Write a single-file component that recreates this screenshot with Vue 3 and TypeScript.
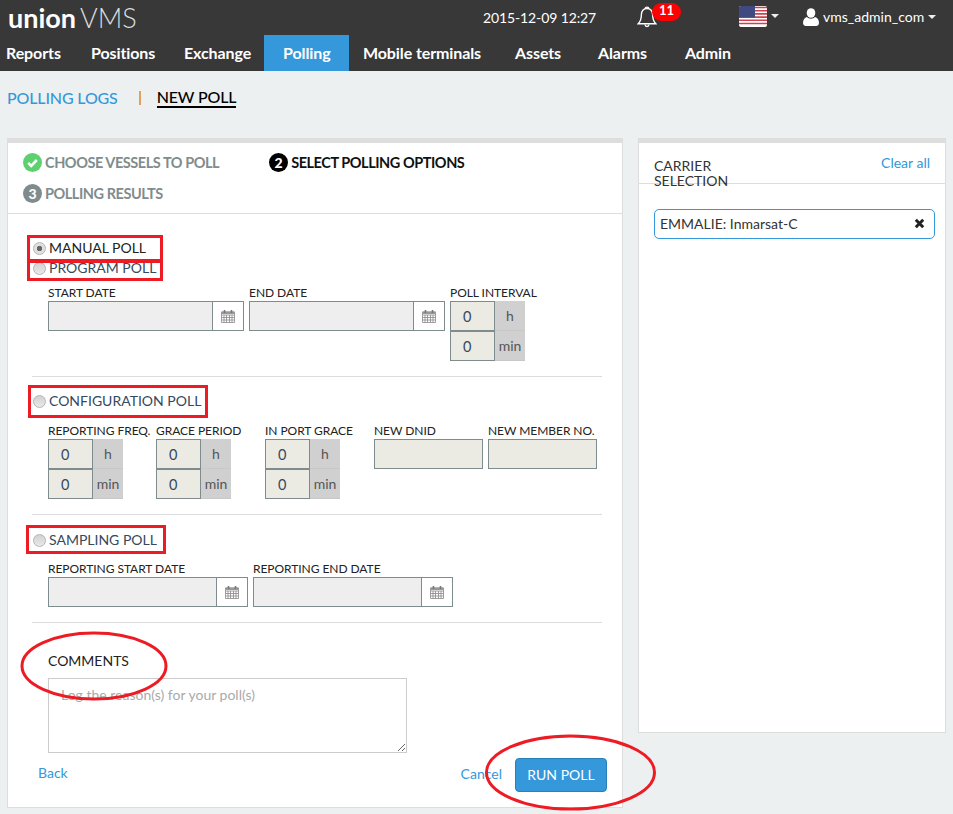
<script setup lang="ts">
const navItems = [
  { label: 'Reports', width: 77 },
  { label: 'Positions', width: 93 },
  { label: 'Exchange', width: 94 },
  { label: 'Polling', width: 85 },
  { label: 'Mobile terminals', width: 152 },
  { label: 'Assets', width: 83 },
  { label: 'Alarms', width: 87 },
  { label: 'Admin', width: 80 },
]

const configFields = [
  { label: 'REPORTING FREQ.', width: 108 },
  { label: 'GRACE PERIOD', width: 109 },
  { label: 'IN PORT GRACE', width: 109 },
]
</script>

<template>
  <div class="page">
    <header class="topbar">
      <div class="topbar-row">
        <div class="logo"><strong>union</strong> <span>VMS</span></div>
        <div class="datetime">2015-12-09 12:27</div>
        <div class="bell">
          <svg width="20" height="24" viewBox="0 0 20 24" fill="none" stroke="#fff" stroke-width="1.4">
            <path d="M10 2.500c-3.600 0-5.600 2.600-5.600 6 0 4.600-1 7-3.200 9.200h17.600c-2.200-2.200-3.200-4.600-3.200-9.200 0-3.400-2-6-5.600-6z" />
            <path d="M8.200 2.600c0-2 3.600-2 3.600 0M8 18.500c.3 2.600 3.700 2.600 4 0" />
          </svg>
          <span class="badge">11</span>
        </div>
        <div class="flag">
          <svg width="28" height="21" viewBox="0 0 28 21">
            <rect width="28" height="21" rx="2" fill="#fff" />
            <path d="M0 1.500h28M0 4.700h28M0 7.900h28M0 11.100h28M0 14.300h28M0 17.500h28" stroke="#c9444f" stroke-width="1.600" />
            <path d="M2 0h14v11.500H0V2a2 2 0 0 1 2-2z" fill="#3f4a80" />
          </svg>
          <i class="caret"></i>
        </div>
        <div class="user">
          <svg width="16" height="18" viewBox="0 0 16 18" fill="#fff">
            <ellipse cx="8" cy="5" rx="4.300" ry="4.800" />
            <path d="M0 15c0-3.500 1.600-5.500 4-6 1 1.200 2.500 1.700 4 1.700S11 10.200 12 9c2.400.5 4 2.500 4 6 0 2-1.500 3-3 3H3c-1.500 0-3-1-3-3z" />
          </svg>
          <span>vms_admin_com</span>
          <i class="caret"></i>
        </div>
      </div>
      <nav class="nav">
        <a
          v-for="item in navItems"
          :key="item.label"
          :class="{ active: item.label === 'Polling' }"
          :style="{ width: item.width + 'px' }"
        >{{ item.label }}</a>
      </nav>
    </header>

    <div class="subtabs">
      <a class="subtab-link">POLLING LOGS</a>
      <span class="subtab-sep"></span>
      <a class="subtab-current">NEW POLL</a>
    </div>

    <main class="content">
      <section class="panel panel-form">
        <div class="steps">
          <div class="step step-first done">
            <svg class="step-icon" width="19" height="19" viewBox="0 0 19 19">
              <circle cx="9.500" cy="9.500" r="9.500" fill="#5dd06f" />
              <path d="M5.200 9.800l3 3 5.600-5.800" fill="none" stroke="#fff" stroke-width="2.600" />
            </svg>
            CHOOSE VESSELS TO POLL
          </div>
          <div class="step current"><span class="step-num">2</span>SELECT POLLING OPTIONS</div>
          <div class="step"><span class="step-num">3</span>POLLING RESULTS</div>
        </div>

        <div class="form">
          <div class="poll-section first">
            <label class="radio-row checked"><i class="radio"></i>MANUAL POLL</label>
            <label class="radio-row"><i class="radio"></i>PROGRAM POLL</label>
            <div class="fields fields-program">
              <div class="field">
                <div class="field-label">START DATE</div>
                <div class="date-group w196">
                  <input class="date-input" />
                  <span class="cal">
                    <svg width="14" height="14" viewBox="0 0 14 14"><use href="#cal-icon" /></svg>
                  </span>
                </div>
              </div>
              <div class="field">
                <div class="field-label">END DATE</div>
                <div class="date-group w196">
                  <input class="date-input" />
                  <span class="cal">
                    <svg width="14" height="14" viewBox="0 0 14 14"><use href="#cal-icon" /></svg>
                  </span>
                </div>
              </div>
              <div class="field">
                <div class="field-label">POLL INTERVAL</div>
                <div class="time-row"><input class="time-input" value="0" /><span class="unit">h</span></div>
                <div class="time-row"><input class="time-input" value="0" /><span class="unit">min</span></div>
              </div>
            </div>
          </div>

          <div class="poll-section second">
            <label class="radio-row"><i class="radio"></i>CONFIGURATION POLL</label>
            <div class="fields fields-config">
              <div v-for="f in configFields" :key="f.label" class="field" :style="{ width: f.width + 'px' }">
                <div class="field-label">{{ f.label }}</div>
                <div class="time-row"><input class="time-input" value="0" /><span class="unit">h</span></div>
                <div class="time-row"><input class="time-input" value="0" /><span class="unit">min</span></div>
              </div>
              <div class="field">
                <div class="field-label">NEW DNID</div>
                <input class="plain-input" />
              </div>
              <div class="field field-member">
                <div class="field-label">NEW MEMBER NO.</div>
                <input class="plain-input" />
              </div>
            </div>
          </div>

          <div class="poll-section third">
            <label class="radio-row"><i class="radio"></i>SAMPLING POLL</label>
            <div class="fields fields-sampling">
              <div class="field">
                <div class="field-label">REPORTING START DATE</div>
                <div class="date-group w200">
                  <input class="date-input" />
                  <span class="cal">
                    <svg width="14" height="14" viewBox="0 0 14 14"><use href="#cal-icon" /></svg>
                  </span>
                </div>
              </div>
              <div class="field">
                <div class="field-label">REPORTING END DATE</div>
                <div class="date-group w200">
                  <input class="date-input" />
                  <span class="cal">
                    <svg width="14" height="14" viewBox="0 0 14 14"><use href="#cal-icon" /></svg>
                  </span>
                </div>
              </div>
            </div>
          </div>

          <div class="comments">
            <div class="comments-title">COMMENTS</div>
            <textarea class="comments-box" placeholder="Log the reason(s) for your poll(s)"></textarea>
          </div>

          <div class="form-footer">
            <a class="link back">Back</a>
            <div class="footer-right">
              <a class="link cancel">Cancel</a>
              <button class="run-btn">RUN POLL</button>
            </div>
          </div>
        </div>
      </section>

      <aside class="panel panel-carrier">
        <div class="carrier-head">
          <h3>CARRIER SELECTION</h3>
          <a class="link">Clear all</a>
        </div>
        <div class="carrier-body">
          <div class="chip">
            <span>EMMALIE: Inmarsat-C</span>
            <svg width="11" height="11" viewBox="0 0 11 11">
              <path d="M1.800 1.800l7.400 7.400M9.200 1.800L1.800 9.200" stroke="#222" stroke-width="3" />
            </svg>
          </div>
        </div>
      </aside>
    </main>

    <svg class="defs" width="0" height="0">
      <symbol id="cal-icon" viewBox="0 0 14 14">
        <path
          d="M.5 3h13v10.500H.5zM.5 6h13M.5 8.500h13M.5 11h13M3 6v7.500M5.500 6v7.500M8.500 6v7.500M11 6v7.500"
          fill="none"
          stroke="#888"
          stroke-width=".8"
        />
        <path d="M.5 2.500h13V5H.5z" fill="#999" />
        <path d="M3.500 1v3M10.500 1v3" stroke="#777" stroke-width="1.600" />
      </symbol>
    </svg>

    <!-- hand drawn annotations on top of the screenshot -->
    <svg class="marks" width="953" height="814" viewBox="0 0 953 814" fill="none" stroke="#ed1c24" stroke-width="3">
      <rect x="28.500" y="236.500" width="133" height="24" />
      <rect x="28.500" y="261.500" width="133" height="18" />
      <rect x="29.500" y="386.500" width="177" height="30" />
      <rect x="27.500" y="526.500" width="137" height="26" />
      <ellipse cx="94" cy="666" rx="72" ry="33" />
      <ellipse cx="570.500" cy="772.500" rx="84" ry="36.500" />
    </svg>
  </div>
</template>

<style>
body {
  background: #ecf0f1;
}
</style>

<style scoped>
.page {
  position: relative;
  width: 953px;
  height: 814px;
  overflow: hidden;
  background: #ecf0f1;
  font-family: Lato, 'Open Sans', sans-serif;
  font-size: 14px;
  color: #333;
}

.topbar {
  background: #383838;
  height: 71px;
  color: #fff;
}

.topbar-row {
  display: flex;
  align-items: center;
  height: 35px;
  padding-left: 8px;
}

.logo {
  width: 475px;
  font-size: 27px;
  line-height: 37px;
  white-space: nowrap;
}

.logo strong {
  font-weight: 700;
}

.logo span {
  margin-left: -3px;
  font-weight: 300;
  color: #ddd;
}

.datetime {
  width: 154px;
  margin-top: -1px;
  font-size: 14px;
  letter-spacing: -0.12px;
}

.bell {
  position: relative;
  width: 102px;
  height: 24px;
}

.badge {
  position: absolute;
  left: 15px;
  top: -3px;
  width: 29px;
  height: 18px;
  border-radius: 9px;
  background: #f00;
  color: #fff;
  font-size: 13px;
  font-weight: 700;
  line-height: 15px;
  text-align: center;
}

.flag {
  display: flex;
  align-items: center;
  gap: 4px;
  width: 64px;
  margin-top: -3px;
}

.caret {
  display: inline-block;
  width: 0;
  height: 0;
  border-left: 4px solid transparent;
  border-right: 4px solid transparent;
  border-top: 4px solid #eee;
}

.user {
  display: flex;
  align-items: center;
  gap: 4px;
  font-size: 14px;
  margin-top: -2px;
}

.nav {
  display: flex;
  height: 36px;
}

.nav a {
  box-sizing: border-box;
  padding-left: 14px;
  font-size: 16px;
  font-weight: 700;
  letter-spacing: -0.1px;
  line-height: 35px;
  white-space: nowrap;
}

.nav a:first-child {
  padding-left: 6px;
}

.nav a.active {
  background: #3498db;
  padding-left: 19px;
}

.subtabs {
  display: flex;
  align-items: center;
  height: 53px;
  padding-left: 7px;
  font-size: 16px;
  font-weight: 500;
  letter-spacing: -0.15px;
}

.subtab-link {
  color: #3498db;
}

.subtab-sep {
  width: 2px;
  height: 14px;
  margin: 0 16px 0 21px;
  background: #e0a060;
}

.subtab-current {
  color: #000;
  border-bottom: 2px solid #000;
  line-height: 19px;
}

.content {
  display: flex;
  align-items: flex-start;
  gap: 15px;
  margin-top: 14px;
  padding-left: 7px;
}

.panel {
  box-sizing: border-box;
  background: #fff;
  border: 1px solid #ddd;
  border-top: 5px solid #ddd;
}

.panel-form {
  width: 616px;
  height: 670px;
}

.panel-carrier {
  width: 308px;
  height: 595px;
}

.steps {
  display: flex;
  flex-wrap: wrap;
  align-content: flex-start;
  height: 71px;
  box-sizing: border-box;
  padding: 4px 130px 0 15px;
  border-bottom: 1px solid #ddd;
}

.step {
  display: flex;
  align-items: center;
  gap: 3px;
  height: 31px;
  font-size: 14.500px;
  font-weight: 700;
  letter-spacing: -0.45px;
  color: #7f8c8d;
  white-space: nowrap;
}

.step-first {
  margin-right: 50px;
}

.step.current {
  color: #111;
}

.step-num {
  width: 19px;
  height: 19px;
  border-radius: 50%;
  background: #7f8c8d;
  color: #fff;
  font-size: 14px;
  font-weight: 900;
  letter-spacing: 0;
  line-height: 19px;
  text-align: center;
}

.current .step-num {
  background: #000;
}

.form {
  padding: 0 20px 0 24px;
}

.poll-section {
  border-bottom: 1px solid #ddd;
  padding-bottom: 15px;
}

.poll-section.first {
  padding-top: 24px;
}

.poll-section.second {
  padding-top: 14px;
}

.poll-section.third {
  padding-top: 15px;
}

.radio-row {
  display: flex;
  align-items: center;
  box-sizing: border-box;
  height: 20px;
  padding-bottom: 2px;
  font-size: 14px;
  color: #34495e;
}

.radio-row.checked {
  color: #222;
}

.radio {
  box-sizing: border-box;
  width: 13px;
  height: 13px;
  margin: 2px 3px 0 1px;
  border: 1px solid #b5b5b5;
  border-radius: 50%;
  background: linear-gradient(#d2d2d2, #e8e8e8);
}

.checked .radio {
  background: radial-gradient(circle, #666 0 2.500px, #e0e0e0 3px);
}

.fields {
  display: flex;
  padding-left: 16px;
}

.fields-program {
  gap: 5px;
  margin-top: 8px;
}

.fields-config {
  margin-top: 13px;
}

.fields-sampling {
  gap: 5px;
  margin-top: 12px;
}

.field-member {
  margin-left: 5px;
}

.field-label {
  height: 14px;
  margin-bottom: 1px;
  font-size: 12px;
  letter-spacing: -0.05px;
  line-height: 14px;
  color: #222;
  white-space: nowrap;
}

.date-group {
  display: flex;
  box-sizing: border-box;
  height: 30px;
  border: 1px solid #7f8c8d;
  background: #fff;
}

.w196 {
  width: 196px;
}

.w200 {
  width: 200px;
}

.date-input {
  flex: 1;
  min-width: 0;
  box-sizing: border-box;
  border: 0;
  border-right: 1px solid #7f8c8d;
  padding: 0;
  background: #eee;
}

.cal {
  display: flex;
  align-items: center;
  justify-content: center;
  width: 30px;
}

.time-row {
  display: flex;
  height: 30px;
}

.time-input {
  box-sizing: border-box;
  width: 45px;
  height: 30px;
  border: 1px solid #7f8c8d;
  padding: 0 0 0 12px;
  background: #ebebe4;
  color: #34495e;
  font: inherit;
  font-size: 14.500px;
}

.unit {
  width: 30px;
  background: #d0d0d0;
  border-bottom: 1px solid #c8c8c8;
  box-sizing: border-box;
  color: #555;
  font-size: 14px;
  line-height: 29px;
  text-align: center;
}

.plain-input {
  display: block;
  box-sizing: border-box;
  width: 109px;
  height: 30px;
  border: 1px solid #7f8c8d;
  padding: 0;
  background: #ebebe4;
}

.comments {
  padding: 29px 0 0 16px;
}

.comments-title {
  font-size: 14px;
  line-height: 18px;
  color: #222;
}

.comments-box {
  display: block;
  box-sizing: border-box;
  width: 359px;
  height: 75px;
  margin-top: 8px;
  border: 1px solid #ccc;
  padding: 7px 12px;
  font: inherit;
  font-size: 14px;
}

.comments-box::placeholder {
  color: #aaa;
  opacity: 1;
}

.form-footer {
  display: flex;
  justify-content: space-between;
  align-items: center;
  height: 34px;
  margin: 5px -5px 0 6px;
}

.footer-right {
  display: flex;
  align-items: center;
  gap: 13px;
}

.link {
  color: #3498db;
  font-size: 14px;
}

.back {
  margin-top: -6px;
}

.cancel {
  margin-top: -4px;
}

.run-btn {
  width: 92px;
  height: 34px;
  border: 1px solid #2980b9;
  border-radius: 4px;
  padding: 0 0 2px;
  background: #3498db;
  color: #fff;
  font: inherit;
  font-size: 14px;
}

.carrier-head {
  display: flex;
  justify-content: space-between;
  height: 41px;
  box-sizing: border-box;
  padding: 11px 15px 0 15px;
  border-bottom: 1px solid #ddd;
}

.carrier-head h3 {
  width: 110px;
  margin: 4px 0 0;
  font-size: 14px;
  font-weight: 400;
  line-height: 15px;
  color: #333;
}

.carrier-body {
  padding: 25px 10px 0 15px;
}

.chip {
  display: flex;
  justify-content: space-between;
  align-items: center;
  box-sizing: border-box;
  height: 30px;
  padding: 0 9px 2px 5px;
  border: 1px solid #3498db;
  border-radius: 5px;
  font-size: 14px;
}

.defs {
  position: absolute;
}

.marks {
  position: absolute;
  left: 0;
  top: 0;
  pointer-events: none;
}
</style>
